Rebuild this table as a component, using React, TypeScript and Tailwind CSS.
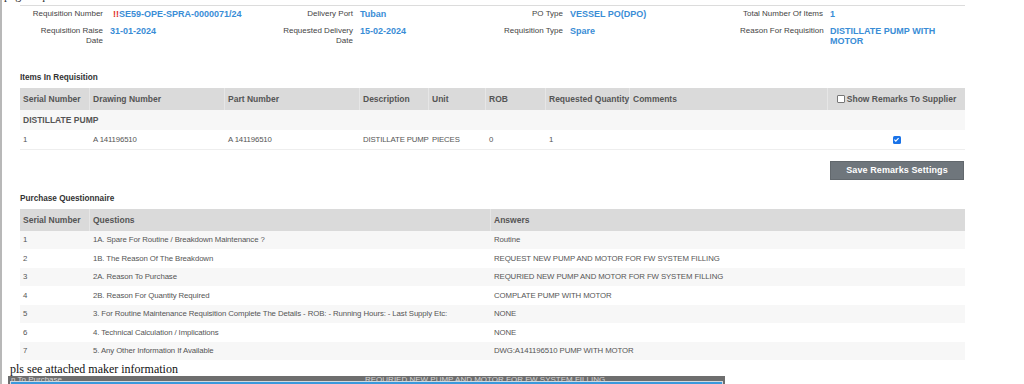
import React from 'react';

// header summary of the requisition
const summaryRows = [
  [
    { label: 'Requisition Number', value: 'SE59-OPE-SPRA-0000071/24', flag: true },
    { label: 'Delivery Port', value: 'Tuban' },
    { label: 'PO Type', value: 'VESSEL PO(DPO)' },
    { label: 'Total Number Of Items', value: '1' },
  ],
  [
    { label: ['Requisition Raise', 'Date'], value: '31-01-2024' },
    { label: ['Requested Delivery', 'Date'], value: '15-02-2024' },
    { label: 'Requisition Type', value: 'Spare' },
    { label: 'Reason For Requisition', value: ['DISTILLATE PUMP WITH', 'MOTOR'] },
  ],
];

const itemCols = [
  { title: 'Serial Number', w: 'w-[70px]' },
  { title: 'Drawing Number', w: 'w-[135px]' },
  { title: 'Part Number', w: 'w-[135px]' },
  { title: 'Description', w: 'w-[69px]' },
  { title: 'Unit', w: 'w-[57px]' },
  { title: 'ROB', w: 'w-[60px]' },
  { title: 'Requested Quantity', w: 'w-[84px]' },
  { title: 'Comments', w: 'w-[198px]' },
];

const itemRow = ['1', 'A 141196510', 'A 141196510', 'DISTILLATE PUMP', 'PIECES', '0', '1', ''];

const questions = [
  ['1', '1A. Spare For Routine / Breakdown Maintenance ?', 'Routine'],
  ['2', '1B. The Reason Of The Breakdown', 'REQUEST NEW PUMP AND MOTOR FOR FW SYSTEM FILLING'],
  ['3', '2A. Reason To Purchase', 'REQURIED NEW PUMP AND MOTOR FOR FW SYSTEM FILLING'],
  ['4', '2B. Reason For Quantity Required', 'COMPLATE PUMP WITH MOTOR'],
  ['5', '3. For Routine Maintenance Requisition Complete The Details - ROB: - Running Hours: - Last Supply Etc:', 'NONE'],
  ['6', '4. Technical Calculation / Implications', 'NONE'],
  ['7', '5. Any Other Information If Available', 'DWG:A141196510 PUMP WITH MOTOR'],
];

const lines = (v: string | string[]) =>
  Array.isArray(v) ? v.map((l, i) => <div key={i}>{l}</div>) : v;

const App: React.FC = () => {
  return (
    <div className="w-[1024px] h-[384px] overflow-hidden bg-white border-l-2 border-[#b8b8b8] font-['Liberation_Sans',Arial,sans-serif]">
      {/* clipped text from the page above */}
      <div className="h-[5px] overflow-hidden pl-[2px]">
        <div className="-mt-[12px] text-[12px] leading-[14px] font-['Liberation_Serif',serif] text-[#333]">page requisition</div>
      </div>
      <div className="ml-[18px] w-[945px] border-t border-[#dcdcdc]" />

      <div className="ml-[18px] mt-[3px] grid grid-cols-[90px_168px_82px_120px_90px_170px_90px_135px] gap-y-[7px]">
        {summaryRows.map((row, ri) =>
          row.map((f, ci) => (
            <React.Fragment key={`${ri}-${ci}`}>
              <div className="text-right pr-[7px] text-[8px] leading-[10px] text-[#444] whitespace-nowrap">{lines(f.label)}</div>
              <div className="text-[9px] leading-[10px] font-bold text-[#3a8dd6] whitespace-nowrap">
                {f.flag && <span className="ml-[3px] text-[#e0302a]">!!</span>}
                {lines(f.value)}
              </div>
            </React.Fragment>
          ))
        )}
      </div>

      <div className="ml-[18px] mt-[27px] text-[8.2px] leading-[10px] font-bold text-[#333]">Items In Requisition</div>

      <div className="ml-[18px] mt-[5px] w-[945px] text-[#555]">
        <div className="flex h-[22px] bg-[#dadada] text-[8.5px] font-bold">
          {itemCols.map((c) => (
            <div key={c.title} className={`${c.w} pl-[3px] flex items-center border-r border-[#e6e6e6] whitespace-nowrap`}>{c.title}</div>
          ))}
          <div className="flex-1 flex items-center justify-center gap-[2px] whitespace-nowrap">
            <span className="w-[8px] h-[8px] bg-white border border-[#777] rounded-[1px]" />
            Show Remarks To Supplier
          </div>
        </div>
        <div className="h-[20px] bg-[#f7f7f7] pl-[3px] flex items-center text-[8.5px] font-bold">DISTILLATE PUMP</div>
        <div className="flex h-[20px] border-b border-[#eeeeee] text-[7.8px] tracking-[-0.15px]">
          {itemCols.map((c, i) => (
            <div key={c.title} className={`${c.w} pl-[3px] flex items-center whitespace-nowrap`}>{itemRow[i]}</div>
          ))}
          <div className="flex-1 flex items-center justify-center">
            <span className="w-[8px] h-[8px] rounded-[1.5px] bg-[#1a73e8] flex items-center justify-center">
              <svg viewBox="0 0 8 8" className="w-[7px] h-[7px]">
                <path d="M1.6 4.2 L3.2 5.8 L6.4 2.4" fill="none" stroke="white" strokeWidth="1.3" />
              </svg>
            </span>
          </div>
        </div>
      </div>

      <div className="ml-[18px] w-[945px] mt-[11px] flex justify-end">
        <button className="mr-[1px] w-[134px] h-[19px] bg-[#6f767c] border border-[#62686d] text-white text-[9px] font-bold tracking-[0.1px]">
          Save Remarks Settings
        </button>
      </div>

      <div className="ml-[18px] mt-[14px] text-[8.2px] leading-[10px] font-bold text-[#333]">Purchase Questionnaire</div>

      <div className="ml-[18px] mt-[5px] w-[945px] text-[#555]">
        <div className="flex h-[22px] bg-[#dadada] text-[8.5px] font-bold">
          <div className="w-[70px] pl-[3px] flex items-center border-r border-[#e6e6e6]">Serial Number</div>
          <div className="w-[401px] pl-[3px] flex items-center border-r border-[#e6e6e6]">Questions</div>
          <div className="flex-1 pl-[3px] flex items-center">Answers</div>
        </div>
        {questions.map((q, i) => (
          <div key={q[0]} className={`flex text-[7.8px] tracking-[-0.1px] ${i % 2 === 0 ? 'h-[18px] bg-[#f7f7f7]' : 'h-[19px] bg-white'}`}>
            <div className="w-[70px] pl-[3px] flex items-center">{q[0]}</div>
            <div className="w-[401px] pl-[3px] flex items-center whitespace-nowrap">{q[1]}</div>
            <div className="flex-1 pl-[3px] flex items-center whitespace-nowrap">{q[2]}</div>
          </div>
        ))}
      </div>

      <div className="ml-[8px] mt-[2px] text-[12px] leading-[14px] font-['Liberation_Serif','Times_New_Roman',serif] text-[#111]">
        pls see attached maker information
      </div>

      {/* dropdown overlapping the bottom edge */}
      <div className="ml-[6px] w-[717px] bg-[#6e6e6e] px-[2px]">
        <div className="h-[5px] overflow-hidden flex items-end text-[8px] leading-[10px] text-[#d6d6d6]">
          <div className="w-[355px] pl-[1px] -mb-[4px] whitespace-nowrap">n To Purchase</div>
          <div className="-mb-[4px] whitespace-nowrap">REQURIED NEW PUMP AND MOTOR FOR FW SYSTEM FILLING</div>
        </div>
        <div className="h-[12px] bg-[#3a99dc] border border-[#cfd8df]" />
      </div>
    </div>
  );
};

export default App;
